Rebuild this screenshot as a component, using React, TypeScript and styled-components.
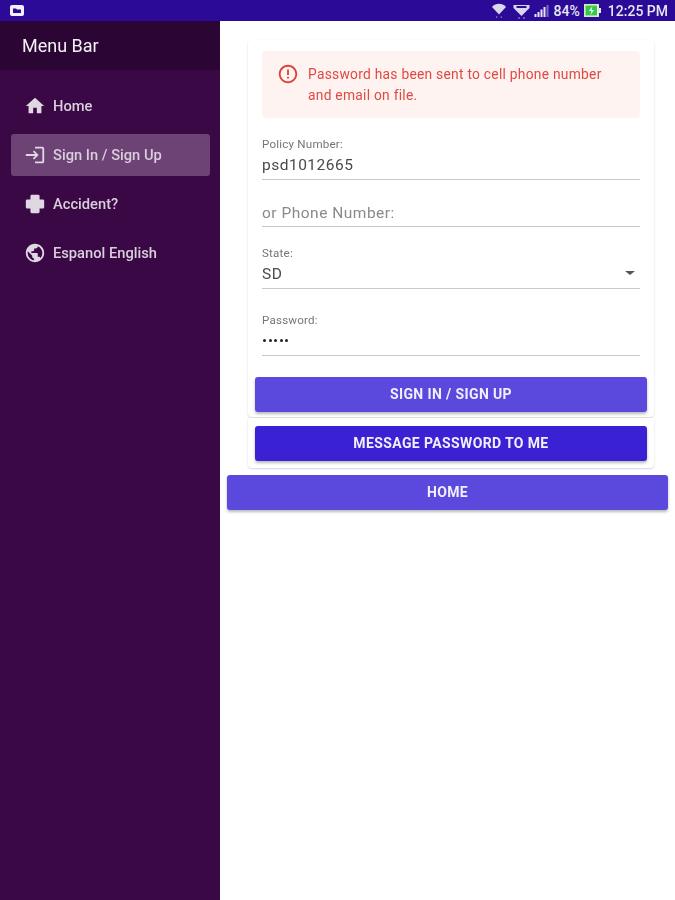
import styled, { createGlobalStyle } from "styled-components";

const GlobalStyle = createGlobalStyle`
  html, body {
    margin: 0;
    padding: 0;
    background: #fff;
    font-family: Roboto, "Liberation Sans", sans-serif;
  }
  * {
    box-sizing: border-box;
  }
`;

const Page = styled.div`
  width: 675px;
  height: 900px;
  display: flex;
  flex-direction: column;
  overflow: hidden;
  filter: blur(0.4px);
`;

const StatusBar = styled.div`
  height: 21px;
  flex: none;
  background: #2a0a96;
  display: flex;
  align-items: center;
  justify-content: space-between;
  padding: 0 7px 0 10px;
  color: #e8e6f4;
  font-size: 14px;
  font-weight: 500;
`;

const StatusGroup = styled.div`
  display: flex;
  align-items: center;
`;

const StatusText = styled.span<{ $gap: number }>`
  margin-left: ${(p) => p.$gap}px;
`;

const Body = styled.div`
  flex: 1;
  display: flex;
  min-height: 0;
`;

const Sidebar = styled.nav`
  width: 220px;
  flex: none;
  background: #3a0845;
  display: flex;
  flex-direction: column;
`;

const SidebarHeader = styled.div`
  height: 49px;
  flex: none;
  background: #2b0634;
  color: #f4f0f5;
  font-size: 18px;
  padding: 0 0 0 22px;
  display: flex;
  align-items: center;
`;

const MenuList = styled.div`
  display: flex;
  flex-direction: column;
  gap: 7px;
  padding: 15px 10px 0 11px;
`;

const MenuItem = styled.div<{ $active?: boolean }>`
  height: 42px;
  display: flex;
  align-items: center;
  gap: 7px;
  padding-left: 13px;
  border-radius: 3px;
  font-size: 14.7px;
  font-weight: 500;
  color: #d8cfdb;
  background: ${(p) => (p.$active ? "#6d4376" : "transparent")};
`;

const MenuIcon = styled.svg`
  width: 22px;
  height: 22px;
  flex: none;
  fill: #dfd8e2;
`;

const Main = styled.main`
  flex: 1;
  display: flex;
  flex-direction: column;
  padding: 19px 7px 0;
`;

const CardStack = styled.div`
  margin: 0 14px 0 21px;
  display: flex;
  flex-direction: column;
`;

const Card = styled.div`
  background: #fff;
  border-radius: 0 0 4px 4px;
  box-shadow: 0 1px 2px rgba(0, 0, 0, 0.16), 0 0 2px rgba(0, 0, 0, 0.04);
`;

const FormCard = styled(Card)`
  height: 377px;
  padding: 11px 14px 0;
  display: flex;
  flex-direction: column;
  border-radius: 4px;
`;

const ActionCard = styled(Card)`
  height: 50px;
  margin-top: 1px;
  padding: 8px 0 0;
`;

const Alert = styled.div`
  height: 67px;
  flex: none;
  background: #fef3f1;
  border-radius: 4px;
  padding: 12px 15px;
  display: flex;
  gap: 9px;
  color: #de4a41;
  font-size: 13.8px;
  line-height: 21px;
  letter-spacing: 0.26px;
`;

const AlertMessage = styled.div`
  margin-top: 1px;
`;

const AlertIcon = styled.svg`
  width: 22px;
  height: 22px;
  flex: none;
  fill: #dd4337;
`;

const Field = styled.div<{ $top: number; $height: number; $pad?: number }>`
  margin-top: ${(p) => p.$top}px;
  height: ${(p) => p.$height}px;
  flex: none;
  border-bottom: 1px solid #c9c9c9;
  display: flex;
  flex-direction: column;
  justify-content: flex-end;
  padding-bottom: ${(p) => p.$pad ?? 5}px;
`;

const FieldLabel = styled.div`
  font-size: 11.6px;
  line-height: 13px;
  color: #757575;
  letter-spacing: 0.2px;
`;

const FieldValue = styled.div`
  margin-top: 5px;
  font-size: 15.5px;
  line-height: 18px;
  color: #4a4a4a;
  letter-spacing: 0.5px;
`;

const Placeholder = styled(FieldValue)`
  color: #8a8a8a;
`;

const SelectRow = styled.div`
  display: flex;
  align-items: center;
  justify-content: space-between;
  padding-right: 5px;
`;

const Caret = styled.div`
  width: 0;
  height: 0;
  margin-top: 2px;
  border-left: 5px solid transparent;
  border-right: 5px solid transparent;
  border-top: 4px solid #555;
`;

const Dots = styled.div`
  display: flex;
  gap: 2.500px;
  margin-top: 7px;
  height: 12px;
  align-items: center;
  padding-left: 1px;
`;

const Dot = styled.span`
  width: 3px;
  height: 3px;
  border-radius: 50%;
  background: #222;
`;

const Button = styled.button<{ $dark?: boolean }>`
  display: block;
  height: 35px;
  width: 100%;
  padding: 0 0 1px;
  border: 0;
  border-radius: 3px;
  background: ${(p) => (p.$dark ? "#3a22d4" : "#5b48dd")};
  color: #f1effc;
  font-family: Roboto, "Liberation Sans", sans-serif;
  font-size: 14px;
  font-weight: 700;
  letter-spacing: 0.38px;
  text-transform: uppercase;
  box-shadow: 0 2px 3px rgba(0, 0, 0, 0.28);
`;

const SignInButton = styled(Button)`
  width: auto;
  align-self: stretch;
  margin: auto -7px 5px;
`;

const ActionButton = styled(Button)`
  width: 392px;
  margin-left: 7px;
`;

const HomeButton = styled(Button)`
  width: 441px;
  margin-top: 7px;
`;

export default function App() {
  return (
    <Page>
      <GlobalStyle />
      <StatusBar>
        <StatusGroup>
          <svg width="14" height="11" viewBox="0 0 14 11">
            <rect width="14" height="11" rx="2" fill="#f2f1fb" />
            <path d="M3 3.500h3l1 1h4v3.500H3z" fill="#2a0a96" />
          </svg>
        </StatusGroup>
        <StatusGroup>
          <svg width="14" height="17" viewBox="0 0 16 17">
            <path d="M0 4.500C4-.5 12-.5 16 4.500L8 13z" fill="#d9d6ee" />
            <path d="M5 15h1v2H5zM10 15h1v2h-1z" fill="#a9a2da" />
          </svg>
          <svg width="19" height="17" viewBox="0 0 18 17" style={{ marginLeft: 6 }}>
            <path d="M1 3h16v3l-8 8-8-8z" fill="#d9d6ee" />
            <path d="M4 4h10v2H4z" fill="#2a0a96" />
            <path d="M6 15h1v2H6zM11 15h1v2h-1z" fill="#a9a2da" />
          </svg>
          <svg width="16" height="12" viewBox="0 0 15 12" style={{ marginLeft: 3 }}>
            <path d="M0 9h2v3H0zM3 7h2v5H3zM6 4.500h2V12H6zM9 2h2v10H9z" fill="#e8e6f4" />
            <path d="M12 0h2v12h-2z" fill="#7a6cc2" />
          </svg>
          <StatusText $gap={4}>84%</StatusText>
          <svg width="17" height="13" viewBox="0 0 17 13" style={{ marginLeft: 4 }}>
            <rect x="0.500" y="0.500" width="14" height="12" fill="#eef4e6" stroke="#d7e8c8" />
            <rect x="15" y="4" width="2" height="5" fill="#e8e6f4" />
            <rect x="1.500" y="1.500" width="11.500" height="10" fill="#35c94a" />
            <path d="M8.500 2 5 7h2.500L6.500 11 10 6H7.500z" fill="#fff" />
          </svg>
          <StatusText $gap={7}>12:25 PM</StatusText>
        </StatusGroup>
      </StatusBar>
      <Body>
        <Sidebar>
          <SidebarHeader>Menu Bar</SidebarHeader>
          <MenuList>
            <MenuItem>
              <MenuIcon viewBox="0 0 24 24">
                <path d="M10 20v-6h4v6h5v-8h3L12 3 2 12h3v8z" />
              </MenuIcon>
              Home
            </MenuItem>
            <MenuItem $active>
              <MenuIcon viewBox="0 0 24 24">
                <path d="M11 7 9.600 8.400 12.200 11H2v2h10.200l-2.600 2.600L11 17l5-5-5-5zm9 12h-8v2h8c1.100 0 2-.9 2-2V5c0-1.100-.9-2-2-2h-8v2h8v14z" />
              </MenuIcon>
              Sign In / Sign Up
            </MenuItem>
            <MenuItem>
              <MenuIcon viewBox="0 0 24 24">
                <path d="M8.500 2h7A1.500 1.500 0 0 1 17 3.500V7h3.500A1.500 1.500 0 0 1 22 8.500v7a1.500 1.500 0 0 1-1.500 1.500H17v3.500a1.500 1.500 0 0 1-1.500 1.500h-7A1.500 1.500 0 0 1 7 20.500V17H3.500A1.500 1.500 0 0 1 2 15.500v-7A1.500 1.500 0 0 1 3.500 7H7V3.500A1.500 1.500 0 0 1 8.500 2z" />
              </MenuIcon>
              Accident?
            </MenuItem>
            <MenuItem>
              <MenuIcon viewBox="0 0 24 24">
                <path d="M12 2C6.480 2 2 6.480 2 12s4.480 10 10 10 10-4.480 10-10S17.520 2 12 2zm-1 17.930C7.050 19.440 4 16.080 4 12c0-.62.080-1.210.21-1.790L9 15v1c0 1.100.9 2 2 2v1.930zm6.900-2.540c-.26-.81-1-1.390-1.900-1.390h-1v-3c0-.55-.45-1-1-1H8v-2h2c.55 0 1-.45 1-1V7h2c1.100 0 2-.9 2-2v-.41c2.930 1.190 5 4.060 5 7.410 0 2.080-.8 3.970-2.100 5.390z" />
              </MenuIcon>
              Espanol English
            </MenuItem>
          </MenuList>
        </Sidebar>
        <Main>
          <CardStack>
            <FormCard>
              <Alert>
                <AlertIcon viewBox="0 0 24 24">
                  <path d="M11 15h2v2h-2zm0-8h2v6h-2zm1-5C6.470 2 2 6.480 2 12s4.470 10 10 10c5.520 0 10-4.480 10-10S17.520 2 12 2zm0 18c-4.420 0-8-3.580-8-8s3.580-8 8-8 8 3.580 8 8-3.580 8-8 8z" />
                </AlertIcon>
                <AlertMessage>
                  Password has been sent to cell phone number
                  <br />
                  and email on file.
                </AlertMessage>
              </Alert>
              <Field $top={14} $height={48}>
                <FieldLabel>Policy Number:</FieldLabel>
                <FieldValue>psd1012665</FieldValue>
              </Field>
              <Field $top={0} $height={47} $pad={4}>
                <Placeholder>or Phone Number:</Placeholder>
              </Field>
              <Field $top={14} $height={48}>
                <FieldLabel>State:</FieldLabel>
                <SelectRow>
                  <FieldValue>SD</FieldValue>
                  <Caret />
                </SelectRow>
              </Field>
              <Field $top={19} $height={48} $pad={9}>
                <FieldLabel>Password:</FieldLabel>
                <Dots>
                  <Dot />
                  <Dot />
                  <Dot />
                  <Dot />
                  <Dot />
                </Dots>
              </Field>
              <SignInButton>Sign In / Sign Up</SignInButton>
            </FormCard>
            <ActionCard>
              <ActionButton $dark>Message Password To Me</ActionButton>
            </ActionCard>
          </CardStack>
          <HomeButton>Home</HomeButton>
        </Main>
      </Body>
    </Page>
  );
}
